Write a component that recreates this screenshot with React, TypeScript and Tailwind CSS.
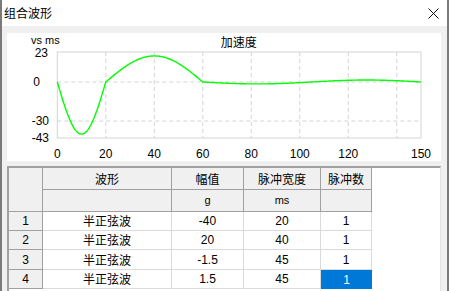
import React from "react";

const CJK = '"Noto Sans CJK SC", "Liberation Sans", sans-serif';
const SANS = '"Liberation Sans", "Noto Sans CJK SC", sans-serif';

const X0 = 50.3;
const X1 = 414;
const Y0 = 19;
const Y1 = 105;
const xs = (t: number) => X0 + (t * (X1 - X0)) / 150;
const ys = (v: number) => Y0 + ((23 - v) * (Y1 - Y0)) / 66;

function accel(t: number): number {
  if (t <= 20) return -40 * Math.sin((Math.PI * t) / 20);
  if (t <= 60) return 20 * Math.sin((Math.PI * (t - 20)) / 40);
  if (t <= 105) return -1.5 * Math.sin((Math.PI * (t - 60)) / 45);
  return 1.5 * Math.sin((Math.PI * (t - 105)) / 45);
}

function Chart() {
  const pts: string[] = [];
  for (let i = 0; i <= 600; i++) {
    const t = (i * 150) / 600;
    pts.push(`${xs(t).toFixed(2)},${ys(accel(t)).toFixed(2)}`);
  }
  const vgrid = [20, 40, 60, 80, 100, 120, 140];
  const xlabels: [number, string][] = [
    [0, "0"],
    [20, "20"],
    [40, "40"],
    [60, "60"],
    [80, "80"],
    [100, "100"],
    [120, "120"],
    [150, "150"],
  ];
  return (
    <svg width={434} height={128} className="block">
      <text x={24} y={11} fontSize={11} fontFamily={SANS} fill="#000">
        vs ms
      </text>
      <text x={231.7} y={14} fontSize={12} fontFamily={CJK} fill="#000" textAnchor="middle">
        加速度
      </text>
      <rect x={X0} y={Y0} width={X1 - X0} height={Y1 - Y0} fill="none" stroke="#d4d4d4" strokeWidth={1} />
      {vgrid.map((t) => (
        <line
          key={t}
          x1={xs(t)}
          x2={xs(t)}
          y1={Y0}
          y2={Y1}
          stroke="#d4d4d4"
          strokeDasharray="4 3"
          strokeWidth={1}
        />
      ))}
      {[0, -30].map((v) => (
        <line
          key={v}
          x1={X0}
          x2={X1}
          y1={ys(v)}
          y2={ys(v)}
          stroke="#d4d4d4"
          strokeDasharray="4 3"
          strokeWidth={1}
        />
      ))}
      <polyline points={pts.join(" ")} fill="none" stroke="#00ff00" strokeWidth={1.4} />
      <text x={41} y={24} fontSize={12} fontFamily={SANS} textAnchor="end" fill="#000">23</text>
      <text x={33} y={53} fontSize={12} fontFamily={SANS} textAnchor="end" fill="#000">0</text>
      <text x={42} y={92} fontSize={12} fontFamily={SANS} textAnchor="end" fill="#000">-30</text>
      <text x={42} y={109} fontSize={12} fontFamily={SANS} textAnchor="end" fill="#000">-43</text>
      {xlabels.map(([t, s]) => (
        <text key={s} x={xs(t)} y={125} fontSize={12} fontFamily={SANS} textAnchor="middle" fill="#000">
          {s}
        </text>
      ))}
    </svg>
  );
}

const rows = [
  ["1", "半正弦波", "-40", "20", "1"],
  ["2", "半正弦波", "20", "40", "1"],
  ["3", "半正弦波", "-1.5", "45", "1"],
  ["4", "半正弦波", "1.5", "45", "1"],
];

const rowH = ["h-[19px]", "h-[19px]", "h-[20px]", "h-[19px]"];

function Table() {
  const hdr = "bg-[#f0f0f0] border-r border-b border-[#a0a0a0] flex items-center justify-center";
  const data = "bg-white border-r border-b border-[#dadada] flex items-center justify-center";
  return (
    <div className="flex-1 mr-[1px] bg-white border-t-2 border-l-2 border-t-[#a0a0a0] border-l-[#a0a0a0] border-r border-r-[#e3e3e3] overflow-hidden">
      <div
        className="grid grid-cols-[34px_129px_72px_77px_51px] grid-rows-[22px_22px]"
        style={{ fontFamily: SANS }}
      >
        <div className={`${hdr} row-span-2`} />
        <div className={`${hdr} text-[12px]`} style={{ fontFamily: CJK }}>波形</div>
        <div className={`${hdr} text-[12px]`} style={{ fontFamily: CJK }}>幅值</div>
        <div className={`${hdr} text-[12px]`} style={{ fontFamily: CJK }}>脉冲宽度</div>
        <div className={`${hdr} text-[12px]`} style={{ fontFamily: CJK }}>脉冲数</div>
        <div className={hdr} />
        <div className={`${hdr} text-[11px]`}>g</div>
        <div className={`${hdr} text-[11px]`}>ms</div>
        <div className={hdr} />
      </div>
      {rows.map((r, i) => (
        <div
          key={i}
          className={`grid grid-cols-[34px_129px_72px_77px_51px] ${rowH[i]} text-[12px] text-black`}
          style={{ fontFamily: SANS }}
        >
          <div className={hdr}>{r[0]}</div>
          <div className={data} style={{ fontFamily: CJK }}>{r[1]}</div>
          <div className={data}>{r[2]}</div>
          <div className={data}>{r[3]}</div>
          {i === 3 ? (
            <div className="bg-[#0078d7] text-white flex items-center justify-center">{r[4]}</div>
          ) : (
            <div className={data}>{r[4]}</div>
          )}
        </div>
      ))}
    </div>
  );
}

export default function App() {
  return (
    <div className="w-[449px] h-[291px] flex flex-col bg-[#f0f0f0] border-x-2 border-x-[#7a7a7a] overflow-hidden">
      <div className="h-[26px] bg-white flex items-center justify-between pl-[2px] pr-[8px] shrink-0">
        <span className="text-[12px] text-black leading-none" style={{ fontFamily: CJK }}>
          组合波形
        </span>
        <svg width={11} height={11} viewBox="0 0 11 11">
          <path d="M0.5 0.5 L10.5 10.5 M10.5 0.5 L0.5 10.5" stroke="#111" strokeWidth={1} />
        </svg>
      </div>
      <div className="flex-1 flex flex-col pl-[5px] pr-[5px] pt-[7px] gap-[5px] min-h-0">
        <div className="h-[128px] w-[434px] bg-white shrink-0">
          <Chart />
        </div>
        <div className="flex-1 flex min-h-0">
          <Table />
        </div>
      </div>
    </div>
  );
}
